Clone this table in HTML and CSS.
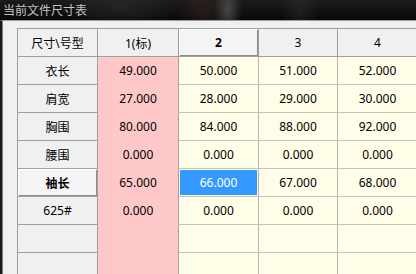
FILE: index.html
```html
<!DOCTYPE html>
<html>
<head>
<meta charset="utf-8">
<link rel="stylesheet" href="styles.css">
</head>
<body>
<div class="titlebar"><span class="title">当前文件尺寸表</span></div>
<div class="frame">
  <div class="client">
    <div class="grid">
      <div class="c hd">尺寸\号型</div>
      <div class="c hd">1(标)</div>
      <div class="c hd raised b">2</div>
      <div class="c hd">3</div>
      <div class="c hd">4</div>

      <div class="c hd">衣长</div>
      <div class="c pk">49.000</div>
      <div class="c yl">50.000</div>
      <div class="c yl">51.000</div>
      <div class="c yl">52.000</div>

      <div class="c hd">肩宽</div>
      <div class="c pk">27.000</div>
      <div class="c yl">28.000</div>
      <div class="c yl">29.000</div>
      <div class="c yl">30.000</div>

      <div class="c hd">胸围</div>
      <div class="c pk">80.000</div>
      <div class="c yl">84.000</div>
      <div class="c yl">88.000</div>
      <div class="c yl">92.000</div>

      <div class="c hd">腰围</div>
      <div class="c pk">0.000</div>
      <div class="c yl">0.000</div>
      <div class="c yl">0.000</div>
      <div class="c yl">0.000</div>

      <div class="c hd raised b">袖长</div>
      <div class="c pk">65.000</div>
      <div class="c yl selcell"><span class="sel">66.000</span></div>
      <div class="c yl">67.000</div>
      <div class="c yl">68.000</div>

      <div class="c hd">625#</div>
      <div class="c pk">0.000</div>
      <div class="c yl">0.000</div>
      <div class="c yl">0.000</div>
      <div class="c yl">0.000</div>

      <div class="c hd"></div>
      <div class="c pk"></div>
      <div class="c yl"></div>
      <div class="c yl"></div>
      <div class="c yl"></div>

      <div class="c hd"></div>
      <div class="c pk"></div>
      <div class="c yl"></div>
      <div class="c yl"></div>
      <div class="c yl"></div>
    </div>
  </div>
</div>
</body>
</html>
```

FILE: styles.css
```css
html, body {
  margin: 0;
  padding: 0;
  width: 416px;
  height: 274px;
  overflow: hidden;
  background: #f0f0f0;
  font-family: "Noto Sans", "Noto Sans CJK SC", sans-serif;
  font-size: 12px;
  color: #000;
}

.titlebar {
  height: 20px;
  background:
    radial-gradient(ellipse 14px 30px at 228px 10px, rgba(110,110,110,0.55), rgba(0,0,0,0)),
    radial-gradient(ellipse 30px 30px at 205px 12px, rgba(70,40,40,0.45), rgba(0,0,0,0)),
    radial-gradient(ellipse 20px 30px at 300px 10px, rgba(60,60,60,0.35), rgba(0,0,0,0)),
    radial-gradient(ellipse 60px 30px at 120px 6px, rgba(50,50,50,0.5), rgba(0,0,0,0)),
    linear-gradient(#1c1c1c, #080808);
  display: flex;
  align-items: center;
  padding-left: 3px;
  box-sizing: border-box;
}

.title {
  font-family: "Noto Sans CJK SC", sans-serif;
  font-size: 12px;
  color: #c4c4c4;
  line-height: 14px;
}

.frame {
  border-top: 1px solid #9a9a9a;
  border-left: 2px solid #1a1a1a;
  background: #f0f0f0;
  height: 253px;
}

.client {
  border-left: 1px solid #7a7a7a;
  padding: 7px 0 0 14px;
  height: 100%;
  box-sizing: border-box;
  overflow: hidden;
}

.grid {
  display: grid;
  grid-template-columns: 80px 81px 80px 79px 80px;
  grid-auto-rows: 28px;
  border-top: 1px solid #a0a0a0;
  border-left: 1px solid #a0a0a0;
  width: 420px;
}

.c {
  display: flex;
  align-items: center;
  justify-content: center;
  box-sizing: border-box;
  border-right: 1px solid #a0a0a0;
  border-bottom: 1px solid #a0a0a0;
  white-space: nowrap;
  font-family: "Noto Sans", "Noto Sans CJK SC", sans-serif;
  font-size: 12px;
}

.hd {
  background: #f0f0f0;
}

.raised {
  background: #f4f4f4;
  box-shadow: inset 1px 1px 0 #ffffff, inset -1px -1px 0 #8c8c8c;
}

.b {
  font-weight: bold;
}

.pk {
  background: #ffc8c8;
  border-bottom-color: #ffc8c8;
}

.yl {
  background: #fffde8;
  border-right-color: #b8b8b0;
  border-bottom-color: #c4c4bc;
}

.selcell {
  padding: 1px;
}

.sel {
  display: flex;
  align-items: center;
  justify-content: center;
  width: 100%;
  height: 100%;
  background: #3399ff;
  color: #ffffff;
}
```
